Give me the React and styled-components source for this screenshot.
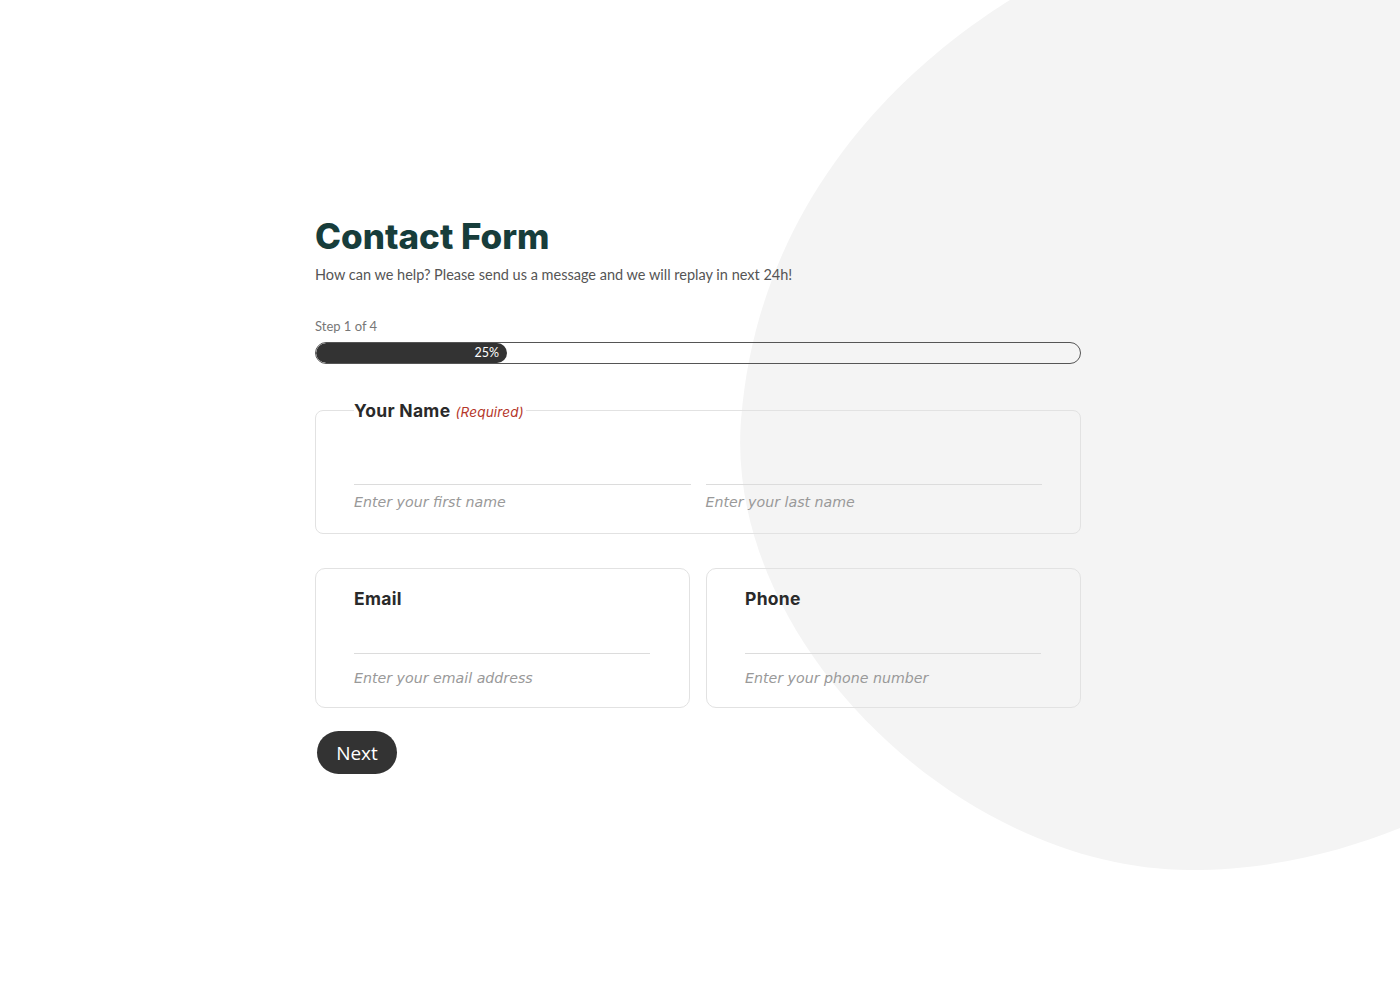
import React from "react";
import styled, { createGlobalStyle } from "styled-components";

const GlobalStyle = createGlobalStyle`
  html, body {
    margin: 0;
    padding: 0;
    background: #fff;
  }
  body {
    font-family: "Lato", "Open Sans", sans-serif;
    color: #333;
  }
`;

// page + decorative blob
const Page = styled.div`
  position: relative;
  min-height: 990px;
  overflow: hidden;
`;

const Blob = styled.svg`
  position: absolute;
  top: 0;
  left: 0;
  width: 1400px;
  height: 990px;
  z-index: 0;
`;

const Wrap = styled.div`
  position: relative;
  z-index: 1;
  width: 766px;
  margin: 0 auto;
  padding: 214px 4px 0 0;
`;

const Title = styled.h1`
  margin: 0;
  font-family: "Inter", sans-serif;
  font-weight: 800;
  font-size: 35px;
  line-height: 44px;
  color: #173d3b;
`;

const Sub = styled.p`
  margin: 7px 0 0;
  font-size: 14.5px;
  line-height: 20px;
  color: #555;
`;

const StepLabel = styled.div`
  margin-top: 32px;
  font-size: 13px;
  line-height: 18px;
  color: #777;
`;

const Track = styled.div`
  margin-top: 7px;
  height: 20px;
  border: 1px solid #555;
  border-radius: 11px;
  overflow: hidden;
`;

const Fill = styled.div`
  height: 100%;
  background: #333;
  border-radius: 11px;
  color: #fff;
  font-size: 12.5px;
  line-height: 20px;
  text-align: right;
  padding-right: 8px;
  box-sizing: border-box;
`;

const Fieldset = styled.fieldset`
  margin: 36px 0 0;
  padding: 28px 38px 20px;
  border: 1px solid #e2e2e2;
  border-radius: 8px;
  min-width: 0;
`;

const Legend = styled.legend`
  padding: 0 2px 0 0;
  font-family: "Inter", sans-serif;
  font-weight: 700;
  font-size: 17.5px;
  letter-spacing: 0.3px;
  color: #2a2a2a;
`;

const Required = styled.span`
  font-style: italic;
  font-weight: 400;
  font-size: 13.5px;
  letter-spacing: 0.2px;
  color: #b5372a;
  margin-left: 5px;
`;

const Row = styled.div`
  display: grid;
  grid-template-columns: 1fr 1fr;
  gap: ${p => p.gap || "15px"};
`;

const Cards = styled(Row)`
  margin-top: 34px;
`;

const Card = styled.div`
  border: 1px solid #e2e2e2;
  border-radius: 10px;
  padding: 18px 39px 18px 38px;
`;

const Label = styled.div`
  font-family: "Inter", sans-serif;
  font-weight: 700;
  font-size: 17.5px;
  letter-spacing: 0.3px;
  line-height: 24px;
  color: #2a2a2a;
`;

const Field = styled.div`
  display: flex;
  flex-direction: column;
`;

const Input = styled.input`
  height: ${p => p.h}px;
  border: none;
  border-bottom: 1px solid #dcdcdc;
  background: transparent;
  outline: none;
  padding: 0;
`;

const Hint = styled.span`
  margin-top: ${p => p.gap}px;
  font-family: "DejaVu Sans", sans-serif;
  font-style: italic;
  font-size: 14.2px;
  line-height: 22px;
  color: #999;
`;

const Next = styled.button`
  margin: 23px 0 0 2px;
  width: 80px;
  height: 43px;
  border: none;
  border-radius: 22px;
  background: #333;
  color: #fff;
  font-family: "Open Sans", sans-serif;
  font-size: 19px;
  cursor: pointer;
`;

function App() {
  const progress = 25;
  return (
    <Page>
      <GlobalStyle />
      <Blob viewBox="0 0 1400 990" aria-hidden="true">
        <path
          d="M1010 0 C 930 50, 760 180, 741 420 C 724 640, 960 870, 1190 870 C 1270 870, 1340 852, 1400 828 L1400 0 Z"
          fill="#f4f4f4"
        />
      </Blob>
      <Wrap>
        <Title>Contact Form</Title>
        <Sub>How can we help? Please send us a message and we will replay in next 24h!</Sub>
        <StepLabel>Step 1 of 4</StepLabel>
        <Track>
          <Fill style={{ width: `${progress}%` }}>{progress}%</Fill>
        </Track>

        <Fieldset>
          <Legend>
            Your Name<Required>(Required)</Required>
          </Legend>
          <Row>
            <Field>
              <Input h={35} />
              <Hint gap={6}>Enter your first name</Hint>
            </Field>
            <Field>
              <Input h={35} />
              <Hint gap={6}>Enter your last name</Hint>
            </Field>
          </Row>
        </Fieldset>

        <Cards gap="16px">
          <Card>
            <Label>Email</Label>
            <Field>
              <Input h={42} />
              <Hint gap={13}>Enter your email address</Hint>
            </Field>
          </Card>
          <Card>
            <Label>Phone</Label>
            <Field>
              <Input h={42} />
              <Hint gap={13}>Enter your phone number</Hint>
            </Field>
          </Card>
        </Cards>

        <Next>Next</Next>
      </Wrap>
    </Page>
  );
}

export default App;
